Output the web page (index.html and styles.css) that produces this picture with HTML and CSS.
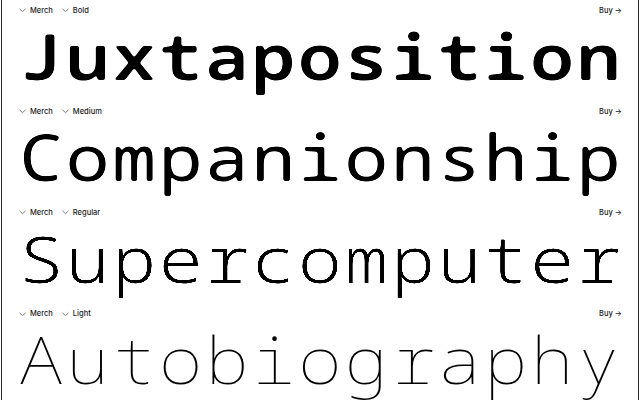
FILE: index.html
```html
<!DOCTYPE html>
<html>
<head>
<meta charset="utf-8">
<link rel="stylesheet" href="styles.css">
</head>
<body>
<svg class="defs" aria-hidden="true">
  <filter id="soft" color-interpolation-filters="sRGB">
    <feGaussianBlur stdDeviation="1.1"/>
    <feComponentTransfer><feFuncA type="linear" slope="4" intercept="-1.5"/></feComponentTransfer>
  </filter>
  <filter id="soft-s" color-interpolation-filters="sRGB">
    <feGaussianBlur stdDeviation="0.6"/>
    <feComponentTransfer><feFuncA type="linear" slope="3" intercept="-1"/></feComponentTransfer>
  </filter>
</svg>
<main class="frame">
  <section class="spec">
    <div class="bar">
      <span class="sel"><svg class="chev" viewBox="0 0 8 5"><polyline points="0.5,0.8 4,4.2 7.5,0.8"/></svg>Merch</span>
      <span class="sel"><svg class="chev" viewBox="0 0 8 5"><polyline points="0.5,0.8 4,4.2 7.5,0.8"/></svg>Bold</span>
      <span class="buy">Buy →</span>
    </div>
    <div class="word w-bold">Juxtaposition</div>
  </section>
  <section class="spec">
    <div class="bar">
      <span class="sel"><svg class="chev" viewBox="0 0 8 5"><polyline points="0.5,0.8 4,4.2 7.5,0.8"/></svg>Merch</span>
      <span class="sel"><svg class="chev" viewBox="0 0 8 5"><polyline points="0.5,0.8 4,4.2 7.5,0.8"/></svg>Medium</span>
      <span class="buy">Buy →</span>
    </div>
    <div class="word w-medium">Companionship</div>
  </section>
  <section class="spec">
    <div class="bar">
      <span class="sel"><svg class="chev" viewBox="0 0 8 5"><polyline points="0.5,0.8 4,4.2 7.5,0.8"/></svg>Merch</span>
      <span class="sel"><svg class="chev" viewBox="0 0 8 5"><polyline points="0.5,0.8 4,4.2 7.5,0.8"/></svg>Regular</span>
      <span class="buy">Buy →</span>
    </div>
    <div class="word w-regular">Supercomputer</div>
  </section>
  <section class="spec">
    <div class="bar">
      <span class="sel"><svg class="chev" viewBox="0 0 8 5"><polyline points="0.5,0.8 4,4.2 7.5,0.8"/></svg>Merch</span>
      <span class="sel"><svg class="chev" viewBox="0 0 8 5"><polyline points="0.5,0.8 4,4.2 7.5,0.8"/></svg>Light</span>
      <span class="buy">Buy →</span>
    </div>
    <div class="word w-light">Autobiography</div>
  </section>
</main>
</body>
</html>
```
FILE: styles.css
```css
html, body {
  margin: 0;
  padding: 0;
  background: #fff;
  height: 100%;
  overflow: hidden;
}
.defs {
  position: absolute;
  width: 0;
  height: 0;
}
.frame {
  margin: 0 1px;
  border-left: 1px solid #2a2a2a;
  border-right: 1px solid #2a2a2a;
  min-height: 100%;
  box-sizing: border-box;
}
.spec {
  padding: 0 16px 8.93px 17px;
}
.bar {
  height: 20px;
  display: flex;
  align-items: center;
  gap: 9px;
  font-family: Inter, "Noto Sans", sans-serif;
  font-size: 7.5px;
  font-weight: 500;
  color: #222;
}
.sel {
  display: flex;
  align-items: center;
  gap: 4px;
}
.chev {
  width: 7px;
  height: 4.5px;
  fill: none;
  stroke: #444;
  stroke-width: 0.8;
}
.buy {
  margin-left: auto;
}
.word {
  width: max-content;
  font-family: "Noto Sans Mono", "DejaVu Sans Mono", monospace;
  font-size: 64px;
  line-height: 72.4px;
  letter-spacing: 2px;
  color: #000;
  white-space: nowrap;
  transform: scaleX(1.15);
  transform-origin: 0 50%;
}
.w-bold {
  font-weight: 650;
  filter: url(#soft);
}
.w-medium {
  font-weight: 430;
  filter: url(#soft);
}
.w-regular {
  font-weight: 290;
  filter: url(#soft-s);
}
.w-light {
  font-weight: 150;
}
```
